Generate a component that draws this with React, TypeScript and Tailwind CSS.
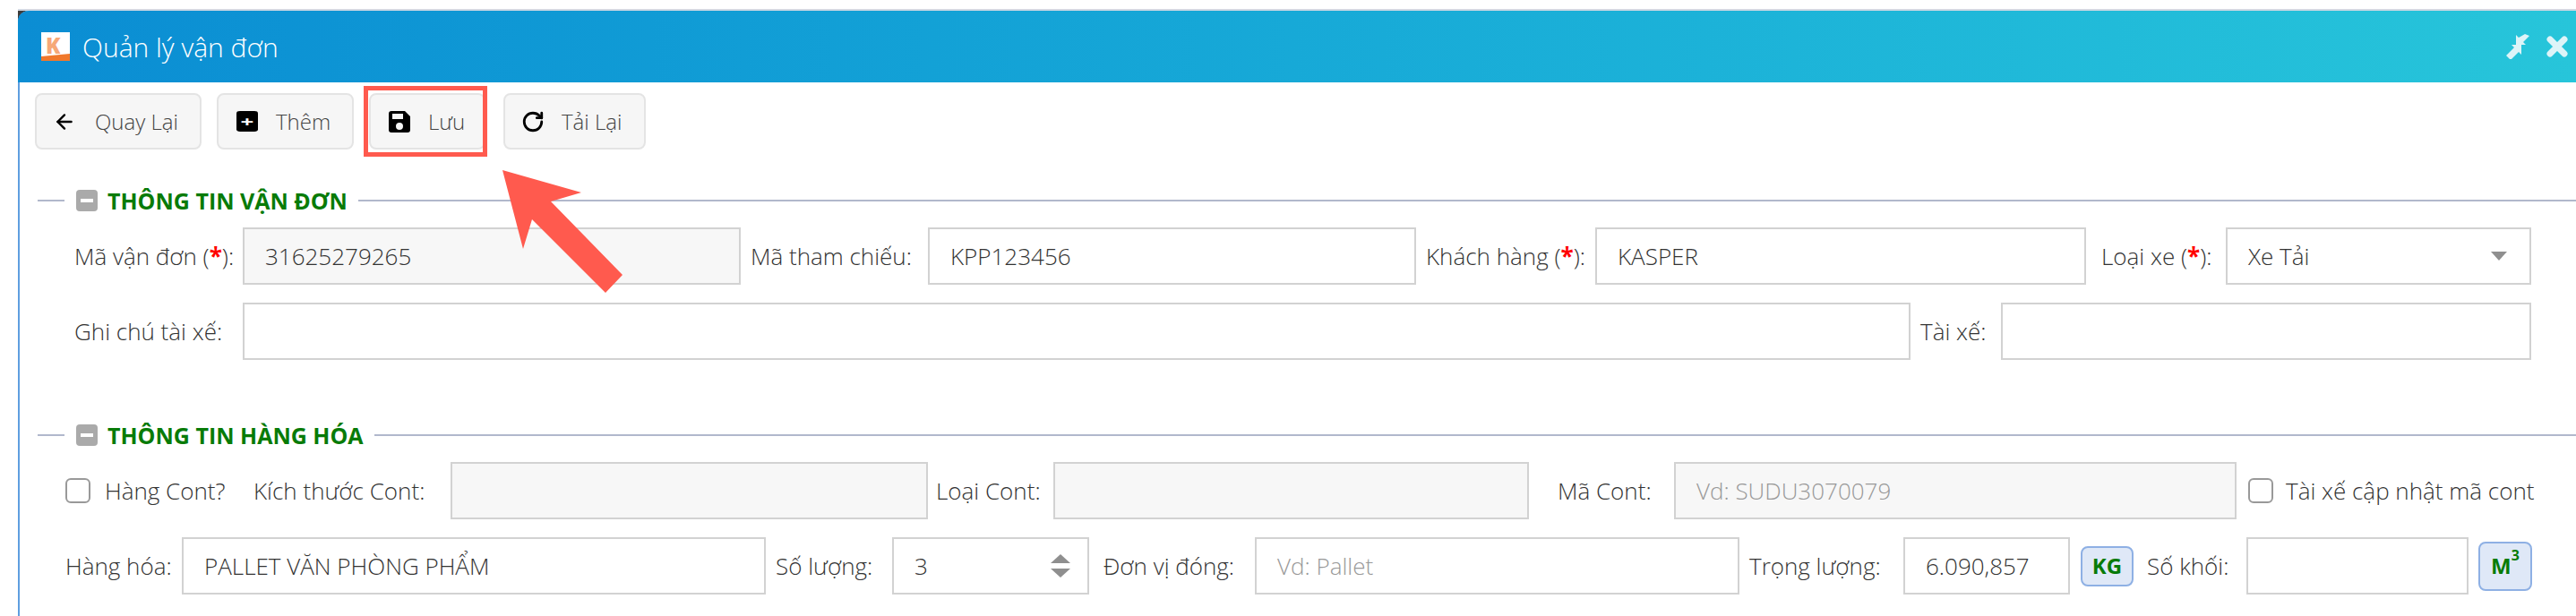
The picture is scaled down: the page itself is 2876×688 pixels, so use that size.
import React from "react";
import { ArrowLeft, RotateCw } from "lucide-react";

const inputCls = "h-16 border-2 border-[#d2d2d2] px-[23px] text-[26px] font-light text-[#333] flex items-center shrink-0";
const labelCls = "text-[26px] font-light text-[#333] shrink-0 whitespace-nowrap";

const Req = ({ text }: { text: string }) => (
  <span className={labelCls}>
    {text} (<b className="font-bold text-[#f00]">*</b>):
  </span>
);

const Legend = ({ title, lineClass }: { title: string; lineClass: string }) => (
  <div className={`flex items-center ${lineClass}`}>
    <div className="w-[30px] h-0.5 bg-[#b1b8cc]" />
    <div className="ml-[13px] w-6 h-6 rounded bg-[#aaa] flex items-center justify-center">
      <div className="w-3.5 h-1 bg-white" />
    </div>
    <span className="ml-[11px] text-[25px] leading-6 font-bold text-[#087b08] whitespace-nowrap">{title}</span>
    <div className="ml-3 flex-1 h-0.5 bg-[#b1b8cc]" />
  </div>
);

const Check = () => <div className="w-7 h-7 rounded-md border-2 border-[#999] bg-white shrink-0" />;

export default function App() {
  return (
    <div className="relative w-[2876px] h-[688px] overflow-hidden bg-white font-['Open_Sans',sans-serif] pt-2.5 pl-5">
      <div className="h-full border-t-2 border-[#d3d8e2] bg-[#3c3c3c]">
        <div className="h-full rounded-tl-xl border-l-2 border-[#5f9ee0] bg-white">
          {/* Header */}
          <div className="h-20 rounded-tl-xl bg-gradient-to-r from-[#0b8dd3] to-[#27c5da] flex items-center pl-[26px] pr-[9px] -ml-0.5">
            <svg width="32" height="32" viewBox="0 0 32 32" className="shrink-0">
              <rect width="32" height="32" fill="#fff" />
              <path d="M0 32V27L32 24V32Z" fill="#f0782c" />
              <text x="5" y="24" fontSize="24" fontWeight="800" fontFamily="Open Sans" fill="#f6a878">K</text>
            </svg>
            <span className="ml-[14px] text-[30px] font-light text-white">Quản lý vận đơn</span>
            <svg width="28" height="28" viewBox="0 0 28 28" className="ml-auto" fill="#ddf4f8">
              <path d="M1 25l9-9-3-3h11v11l-3-3-9 9zM27 3l-7 7 3 3H12V2l3 3 7-4z" transform="translate(0 -1)" />
            </svg>
            <svg width="24" height="24" viewBox="0 0 24 24" className="ml-[18px]" fill="none" stroke="#ddf4f8" strokeWidth="7" strokeLinecap="round">
              <path d="M4 4l16 16M20 4L4 20" />
            </svg>
          </div>

          {/* Toolbar */}
          <div className="flex items-center h-[63px] mt-3 pl-[17px] text-[24px] font-light text-[#444]">
            <div className="w-[186px] h-full rounded-lg border-2 border-[#e4e4e4] bg-[#f6f6f6] flex items-center pl-[18px]">
              <ArrowLeft size={26} strokeWidth={2.2} color="#000" />
              <span className="ml-[21px]">Quay Lại</span>
            </div>
            <div className="ml-[17px] w-[153px] h-full rounded-lg border-2 border-[#e4e4e4] bg-[#f6f6f6] flex items-center pl-5">
              <div className="w-6 h-[37px] rounded-sm bg-black flex items-center justify-center text-white font-bold text-[26px] leading-none scale-y-[0.62] origin-center">+</div>
              <span className="ml-5">Thêm</span>
            </div>
            <div className="relative ml-[17px] w-[130px] h-full rounded-lg border-2 border-[#e4e4e4] bg-[#f6f6f6] flex items-center pl-5">
              <svg width="24" height="24" viewBox="0 0 24 24" className="shrink-0" fill="#000">
                <path fillRule="evenodd" d="M3 0h15l6 6v15a3 3 0 0 1-3 3H3a3 3 0 0 1-3-3V3a3 3 0 0 1 3-3zM4 3v6h12V3zM12 13a4 4 0 1 0 0 8 4 4 0 0 0 0-8z" />
              </svg>
              <span className="ml-5">Lưu</span>
              <div className="absolute -left-2 -right-1 -top-2.5 -bottom-2.5 border-[5px] border-[#ff5a4e]" />
            </div>
            <div className="ml-5 w-[159px] h-full rounded-lg border-2 border-[#e4e4e4] bg-[#f6f6f6] flex items-center pl-[18px]">
              <RotateCw size={26} strokeWidth={2.6} color="#000" />
              <span className="ml-[19px]">Tải Lại</span>
            </div>
          </div>

          {/* Thong tin van don */}
          <Legend title="THÔNG TIN VẬN ĐƠN" lineClass="mt-[45px] pl-5" />
          <div className="flex items-center mt-[18px] pl-[61px] gap-[11px]">
            <div className="w-[177px]"><Req text="Mã vận đơn" /></div>
            <div className={`${inputCls} w-[556px] bg-[#f7f7f7]`}>31625279265</div>
            <span className={`${labelCls} w-[187px]`}>Mã tham chiếu:</span>
            <div className={`${inputCls} w-[545px]`}>KPP123456</div>
            <div className="w-[178px]"><Req text="Khách hàng" /></div>
            <div className={`${inputCls} w-[548px]`}>KASPER</div>
            <div className="w-[128px] ml-1.5"><Req text="Loại xe" /></div>
            <div className={`${inputCls} w-[341px] justify-between`}>
              Xe Tải
              <div className="w-0 h-0 border-x-[9px] border-t-[10px] border-x-transparent border-t-[#8f8f8f] mr-0.5" />
            </div>
          </div>
          <div className="flex items-center mt-5 pl-[61px] gap-[11px]">
            <span className={`${labelCls} w-[177px]`}>Ghi chú tài xế:</span>
            <div className={`${inputCls} w-[1862px]`} />
            <span className={`${labelCls} w-[79px]`}>Tài xế:</span>
            <div className={`${inputCls} w-[592px]`} />
          </div>

          {/* Thong tin hang hoa */}
          <Legend title="THÔNG TIN HÀNG HÓA" lineClass="mt-[72px] pl-5" />
          <div className="flex items-center mt-[18px] pl-[51px]">
            <Check />
            <span className={`${labelCls} ml-4 w-[166px]`}>Hàng Cont?</span>
            <span className={`${labelCls} w-[220px]`}>Kích thước Cont:</span>
            <div className={`${inputCls} w-[533px] bg-[#f7f7f7]`} />
            <span className={`${labelCls} ml-[9px] w-[131px]`}>Loại Cont:</span>
            <div className={`${inputCls} w-[531px] bg-[#f7f7f7]`} />
            <span className={`${labelCls} ml-8 w-[130px]`}>Mã Cont:</span>
            <div className={`${inputCls} w-[628px] bg-[#f7f7f7] text-[#999]`}>Vd: SUDU3070079</div>
            <div className="ml-[13px]"><Check /></div>
            <span className={`${labelCls} ml-3.5`}>Tài xế cập nhật mã cont</span>
          </div>
          <div className="flex items-center mt-5 pl-[51px]">
            <span className={`${labelCls} w-[130px]`}>Hàng hóa:</span>
            <div className={`${inputCls} w-[652px]`}>PALLET VĂN PHÒNG PHẨM</div>
            <span className={`${labelCls} ml-[11px] w-[130px]`}>Số lượng:</span>
            <div className={`${inputCls} w-[220px] justify-between`}>
              3
              <div className="flex flex-col gap-1.5 -mr-1">
                <div className="w-0 h-0 border-x-[11px] border-b-[10px] border-x-transparent border-b-[#8f8f8f]" />
                <div className="w-0 h-0 border-x-[11px] border-t-[10px] border-x-transparent border-t-[#8f8f8f]" />
              </div>
            </div>
            <span className={`${labelCls} ml-4 w-[169px]`}>Đơn vị đóng:</span>
            <div className={`${inputCls} w-[541px] text-[#999]`}>Vd: Pallet</div>
            <span className={`${labelCls} ml-[11px] w-[172px]`}>Trọng lượng:</span>
            <div className={`${inputCls} w-[186px]`}>6.090,857</div>
            <div className="ml-3 w-[59px] h-[45px] rounded-lg border-2 border-[#8eb0e4] bg-[#dfe8f7] flex items-center justify-center text-[24px] font-bold text-[#087b08]">KG</div>
            <span className={`${labelCls} ml-[15px] w-[111px]`}>Số khối:</span>
            <div className={`${inputCls} w-[248px]`} />
            <div className="ml-[11px] w-[60px] h-[55px] rounded-lg border-2 border-[#8eb0e4] bg-[#dfe8f7] flex items-center justify-center text-[24px] font-bold text-[#087b08]">
              M<sup className="text-[16px] -mt-2">3</sup>
            </div>
          </div>
        </div>
      </div>

      {/* Annotation arrow */}
      <svg className="absolute left-0 top-0 pointer-events-none" width="2876" height="688" fill="#ff5a4e">
        <polygon points="561,190 649,215 615,225 695,307 676,327 594,245 584,278" />
      </svg>
    </div>
  );
}
